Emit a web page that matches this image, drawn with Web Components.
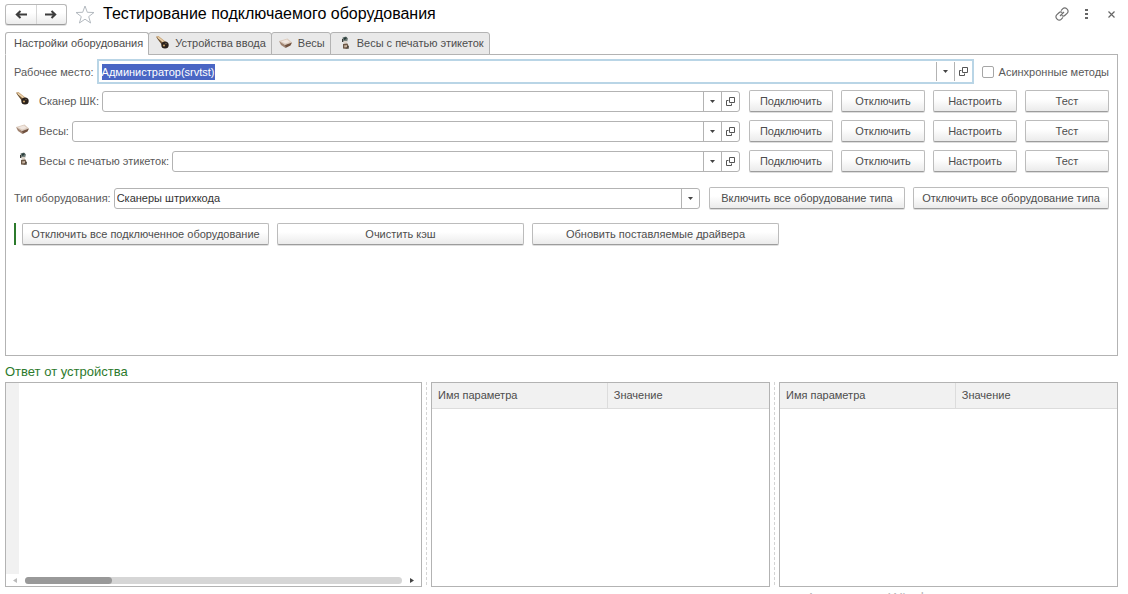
<!DOCTYPE html>
<html lang="ru">
<head>
<meta charset="utf-8">
<title>Тестирование подключаемого оборудования</title>
<style>
  html, body { margin: 0; height: 100%; }
  body {
    font: 11px/16px "Liberation Sans", Arial, sans-serif;
    color: #4d4d4d;
    background: #fff;
    overflow: hidden;
    --line: #b3b3b3;
    --green: #2c7a2c;
  }
</style>
</head>
<body>
<test-app></test-app>

<script>
const define = (name, html, setup) => {
  const tpl = document.createElement('template');
  tpl.innerHTML = '<style>*{box-sizing:border-box}button,input,select,textarea{font:inherit;color:inherit;margin:0}</style>' + html;
  customElements.define(name, class extends HTMLElement {
    constructor() {
      super();
      this.attachShadow({ mode: 'open' }).append(tpl.content.cloneNode(true));
    }
    connectedCallback() { if (setup) setup(this, this.shadowRoot); }
  });
};

/* Small pictures of the devices */
const ICONS = {
  scanner: '<path d="M0 .5 2.500 0 10 6 6.500 9Z" fill="#c9a678"/><path d="M0 .5 1.500 3 6 9 8 8Z" fill="#6b5236"/><path d="M2 1.500 8.500 6.500" stroke="#ecd5b0" stroke-width="1.200"/><ellipse cx="9" cy="9" rx="3.700" ry="3.500" fill="#2a211b"/><circle cx="8" cy="9.500" r="1.100" fill="#c29c64"/><circle cx="10" cy="7.500" r=".7" fill="#756652"/>',
  scales: '<path d="M0 5 8.500 2.500 13 6.500 6 9Z" fill="#dccbbd"/><path d="M0 5 6 9 6.500 12 2 9Z" fill="#a08370"/><path d="M6 9 13 6.500 11.500 9.500 6.500 12Z" fill="#70513e"/><path d="M2 5.200 8 3.500 10.800 6 6.200 7.500Z" fill="#f0e6df"/>',
  label: '<path d="M4.500 1.500 8 .5 10 2.500 9 6 5 6Z" fill="#75807c"/><path d="M5.500 1.800 8.500 1V3L6 4Z" fill="#283c3b"/><path d="M5.500 5h3.500v3.500H5.500z" fill="#ddd4ca"/><path d="M5 8 9.500 7.500 11 11 9 13 5 12.500Z" fill="#6b5746"/><path d="M6 9.500 9 9V11L6.500 11.500Z" fill="#c9b5a3"/><path d="M4.500 3v3M10 10v3" stroke="#393a37"/>'
};
define('device-icon', `
  <style>:host{display:block;flex:none;width:14px;height:14px}svg{display:block}</style>
  <svg width="14" height="14" viewBox="0 0 14 14" fill="none" aria-hidden="true"></svg>`,
  (el, root) => { root.querySelector('svg').innerHTML = ICONS[el.getAttribute('name')]; });

define('push-button', `
  <style>
    :host{display:block;flex:none}
    button{display:block;width:100%;height:22px;padding:0 8px;white-space:nowrap;
      border:1px solid #bcbcbc;border-bottom-color:#9c9c9c;border-radius:2px;
      background:linear-gradient(#fff 40%,#ebebeb);box-shadow:0 1px 0 #dedede}
  </style>
  <button type="button"><slot></slot></button>`);

/* Text field with a drop-down button and an open button */
define('ref-field', `
  <style>
    :host{display:flex;flex:1;align-items:center;gap:3px;min-width:0}
    label{flex:none;white-space:nowrap;color:#595959}
    .box{flex:1;min-width:0;display:flex;align-items:stretch;height:21px;border:1px solid var(--line);border-radius:3px;background:#fff}
    input{flex:1;min-width:0;width:0;padding:0 2px;border:0;outline:0;background:none;color:#333}
    input::selection{background:#4a66c4;color:#fff}
    button{flex:none;width:18px;padding:0;border:0;border-left:1px solid var(--line);background:none;display:grid;place-items:center}
    :host([active]) .box{height:25px;border:2px solid #b9d5e6;border-radius:0}
    :host([active]) button{margin:1px 0}
    :host([active]) input{padding:0 3px}
  </style>
  <label for="f"></label>
  <div class="box">
    <input id="f" type="text">
    <button type="button" aria-label="Выбрать"><svg width="5" height="3"><path d="M0 0h5L2.500 3z" fill="#444"/></svg></button>
    <button type="button" aria-label="Открыть"><svg width="9" height="9" fill="none" stroke="#555"><path d="M3.500.5h5v5h-5zM2.500 3.500h-2v5h5v-2"/></svg></button>
  </div>`,
  (el, root) => {
    const input = root.querySelector('input');
    root.querySelector('label').textContent = el.getAttribute('label');
    input.value = el.getAttribute('value') || '';
    if (el.hasAttribute('active')) { input.focus(); input.select(); }
  });

define('choice-field', `
  <style>
    :host{display:flex;flex:1;align-items:center;gap:3px;min-width:0;margin-right:1px}
    label{flex:none;color:#595959}
    .box{flex:1;display:grid;grid-template-columns:1fr 18px;height:21px;border:1px solid var(--line);border-radius:3px}
    select{grid-area:1/1/2/3;appearance:none;border:0;outline:0;background:none;padding:0 2px;color:#333}
    span{grid-area:1/2;display:grid;place-items:center;border-left:1px solid var(--line);pointer-events:none}
  </style>
  <label for="s">Тип оборудования:</label>
  <div class="box">
    <select id="s"><option>Сканеры штрихкода</option></select>
    <span><svg width="5" height="3"><path d="M0 0h5L2.500 3z" fill="#444"/></svg></span>
  </div>`);

define('device-row', `
  <style>
    :host{display:flex;align-items:center;gap:8px;padding-left:2px}
    device-icon{align-self:flex-start;margin:2px 1px 0 0}
    ref-field{margin-right:1px}
    push-button{width:84px}
  </style>
  <device-icon></device-icon><ref-field></ref-field>
  <push-button>Подключить</push-button><push-button>Отключить</push-button><push-button>Настроить</push-button><push-button>Тест</push-button>`,
  (el, root) => {
    const icon = root.querySelector('device-icon');
    const next = document.createElement('device-icon');
    next.setAttribute('name', el.getAttribute('icon'));
    icon.replaceWith(next);
    const field = document.createElement('ref-field');
    field.setAttribute('label', el.getAttribute('label'));
    root.querySelector('ref-field').replaceWith(field);
  });

define('check-option', `
  <style>
    :host{display:block;flex:none}
    label{display:flex;align-items:center;gap:5px;white-space:nowrap;color:#595959}
    input{appearance:none;width:12px;height:12px;border:1px solid #a6a6a6;border-radius:2px;background:#fff}
    input:checked{background:#777}
  </style>
  <label><input type="checkbox"><span><slot></slot></span></label>`);

define('window-header', `
  <style>
    :host{display:flex;align-items:center;height:28px}
    .nav{display:flex;width:62px;height:21px;border:1px solid #b9b9b9;border-bottom-color:#9c9c9c;border-radius:3px;background:linear-gradient(#fff 40%,#ececec);box-shadow:0 1px 0 #e0e0e0}
    button{padding:0;border:0;background:none;display:grid;place-items:center}
    .nav button{flex:1}
    .nav button+button{border-left:1px solid #d5d5d5}
    .star{margin:0 8px}
    h1{flex:1;margin:0;font-size:16px;line-height:20px;font-weight:400;color:#000;white-space:nowrap}
    .tools{display:flex;gap:8px;margin-right:-2px}
    .tools button{width:17px;height:20px}
  </style>
  <div class="nav">
    <button type="button" aria-label="Назад"><svg width="12" height="9" fill="none" stroke="#3c3c3c" stroke-width="2"><path d="M12 4.500H2M5.500 1 1.800 4.500 5.500 8"/></svg></button>
    <button type="button" aria-label="Вперёд"><svg width="12" height="9" fill="none" stroke="#3c3c3c" stroke-width="2"><path d="M0 4.500h10M6.500 1l3.700 3.500L6.500 8"/></svg></button>
  </div>
  <button class="star" type="button" aria-label="В избранное"><svg width="20" height="19" fill="#fff" stroke="#b4bac0"><path d="M10 1l2.300 6.300 6.700.2-5.300 4.100 1.900 6.400L10 14.200 4.400 18l1.900-6.400L1 7.500l6.700-.2z"/></svg></button>
  <h1><slot></slot></h1>
  <div class="tools">
    <button type="button" aria-label="Ссылка"><svg width="14" height="14" viewBox="0 0 14 14" fill="none" stroke="#707070" stroke-width="1.200"><path d="M6 3.600l1.900-1.900a2.600 2.600 0 0 1 3.700 0l.7.7a2.600 2.600 0 0 1 0 3.700L10 8.300a2.600 2.600 0 0 1-3.200.3M8 10.400l-1.900 1.900a2.600 2.600 0 0 1-3.700 0l-.7-.7a2.600 2.600 0 0 1 0-3.700L4 5.700a2.600 2.600 0 0 1 3.200-.3M5 9l4-4"/></svg></button>
    <button type="button" aria-label="Ещё"><svg width="3" height="10" fill="#666"><path d="M0 0h3v2H0zM0 4h3v2H0zM0 8h3v2H0z"/></svg></button>
    <button type="button" aria-label="Закрыть"><svg width="7" height="7" stroke="#666" stroke-width="1.200"><path d="M.5.5l6 6M6.500.5l-6 6"/></svg></button>
  </div>`);

define('tab-strip', `
  <style>
    :host{display:flex;position:relative;z-index:1;margin-bottom:-1px}
    button{display:flex;align-items:center;gap:5px;height:23px;padding:0 5px 1px 7px;margin-left:-1px;border:1px solid var(--line);border-radius:3px 3px 0 0;background:#e9e9e9;white-space:nowrap}
    button:first-of-type{margin:0;padding-left:8px;background:#fff;border-bottom-color:#fff}
  </style>
  <button type="button">Настройки оборудования</button>
  <button type="button"><device-icon name="scanner"></device-icon>Устройства ввода</button>
  <button type="button"><device-icon name="scales"></device-icon>Весы</button>
  <button type="button"><device-icon name="label"></device-icon>Весы с печатью этикеток</button>`);

define('param-table', `
  <style>
    :host{display:block;min-width:0;border:1px solid var(--line);background:#fff}
    table{width:100%;border-collapse:collapse;table-layout:fixed}
    th{height:25px;padding:0 6px;text-align:left;font-weight:400;background:#f1f1f1;border-bottom:1px solid #dcdcdc}
    th:first-child{width:52%;border-right:1px solid #dcdcdc}
  </style>
  <table><thead><tr><th scope="col">Имя параметра</th><th scope="col">Значение</th></tr></thead></table>`);

define('answer-box', `
  <style>
    :host{display:flex;flex-direction:column;min-width:0;border:1px solid var(--line)}
    textarea{flex:1;min-height:0;width:100%;resize:none;outline:0;border:0;border-left:13px solid #f1f1f1;background:#fff;padding:4px}
    .bar{display:flex;align-items:center;gap:8px;height:12px;padding:0 7px}
    .track{flex:1;height:7px;border-radius:4px;background:#d6d6d6}
    .thumb{width:23%;height:100%;border-radius:4px;background:#999}
  </style>
  <textarea aria-label="Ответ от устройства"></textarea>
  <div class="bar">
    <svg width="4" height="5"><path d="M4 0v5L0 2.500z" fill="#bbb"/></svg>
    <div class="track"><div class="thumb"></div></div>
    <svg width="4" height="5"><path d="M0 0v5l4-2.500z" fill="#444"/></svg>
  </div>`);

define('split-line', `
  <style>:host{display:block;width:1px;justify-self:center;background:repeating-linear-gradient(#d4d4d4 0 3px,#fff 3px 5px)}</style>`);

define('test-app', `
  <style>
    :host{display:grid;grid-template-columns:minmax(0,1fr);grid-template-rows:auto auto minmax(0,302fr) auto minmax(0,205fr) auto;height:100vh;padding:0 10px 0 5px;overflow:hidden;box-sizing:border-box}
    window-header{margin-bottom:4px}
    .panel{border:1px solid var(--line);padding:4px 8px}
    .row{display:flex;align-items:center;gap:8px}
    .devices{display:grid;gap:8px;margin:6px 0 15px}
    .type push-button{width:196px}
    .all{margin-top:14px}
    .all push-button{width:247px}
    .mark{width:2px;height:22px;background:var(--green);margin-right:-2px}
    h2{margin:6px 0 0;font-size:13px;line-height:20px;font-weight:400;color:var(--green)}
    .answer{display:grid;grid-template-columns:417fr 9px 339fr 9px 339fr}
    footer{height:7px;overflow:hidden;font:15px/20px "Open Sans",sans-serif;color:#b8b8b8;padding-left:72%}
  </style>
  <window-header>Тестирование подключаемого оборудования</window-header>
  <tab-strip></tab-strip>
  <div class="panel">
    <div class="row"><ref-field active label="Рабочее место:" value="Администратор(srvtst)"></ref-field><check-option>Асинхронные методы</check-option></div>
    <div class="devices">
      <device-row icon="scanner" label="Сканер ШК:"></device-row>
      <device-row icon="scales" label="Весы:"></device-row>
      <device-row icon="label" label="Весы с печатью этикеток:"></device-row>
    </div>
    <div class="row type"><choice-field></choice-field><push-button>Включить все оборудование типа</push-button><push-button>Отключить все оборудование типа</push-button></div>
    <div class="row all"><div class="mark"></div><push-button>Отключить все подключенное оборудование</push-button><push-button>Очистить кэш</push-button><push-button>Обновить поставляемые драйвера</push-button></div>
  </div>
  <h2>Ответ от устройства</h2>
  <div class="answer"><answer-box></answer-box><split-line></split-line><param-table></param-table><split-line></split-line><param-table></param-table></div>
  <footer>Активация Windows</footer>`);
</script>
</body>
</html>
